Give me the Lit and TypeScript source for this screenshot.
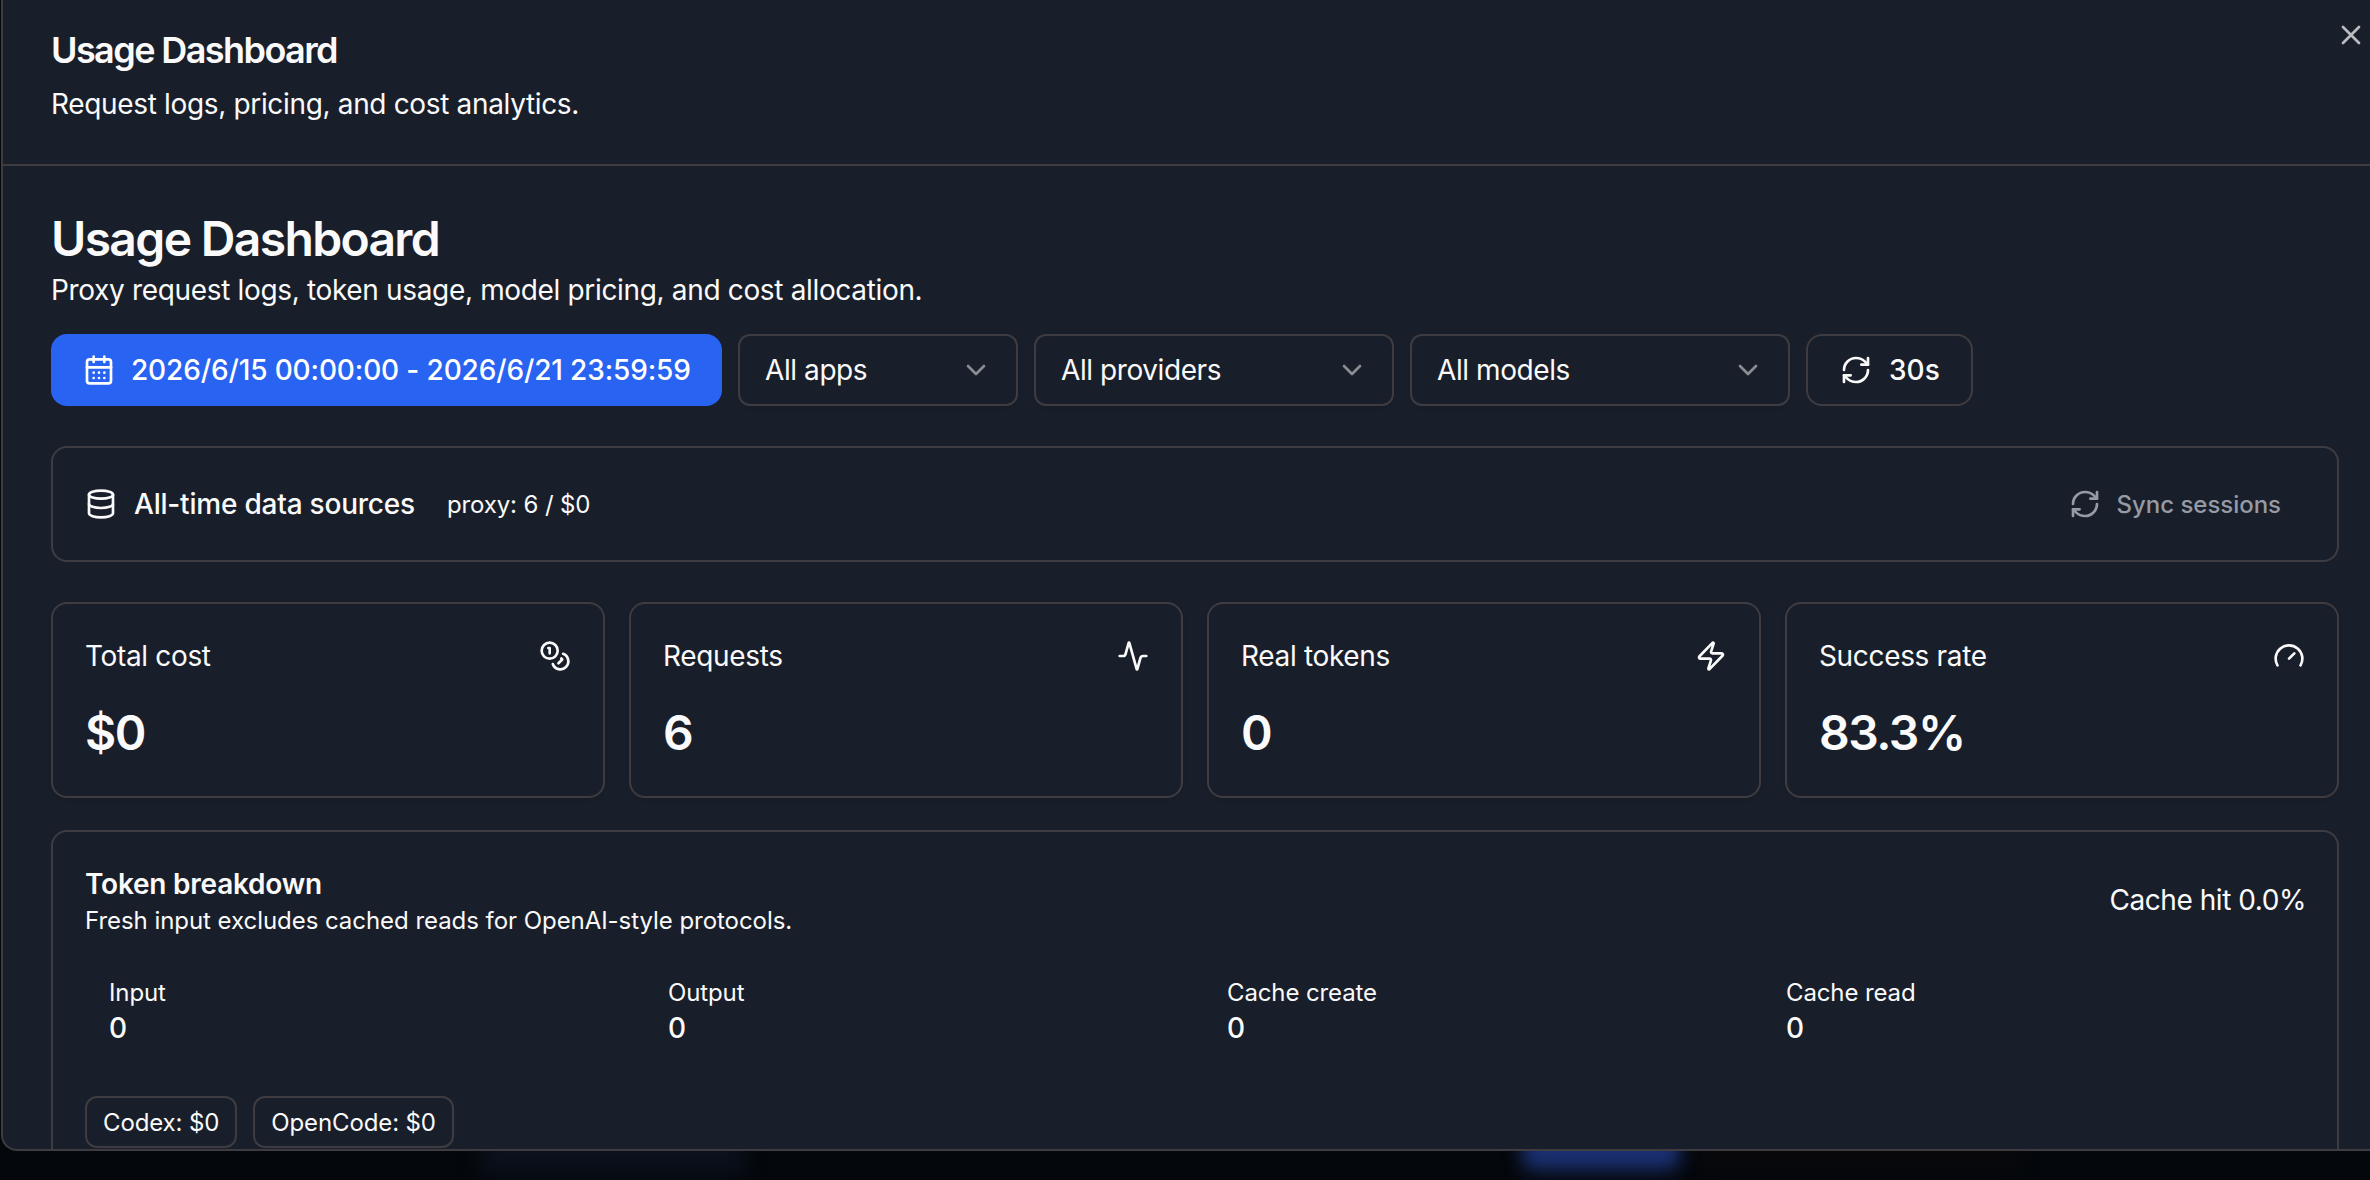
import { LitElement, html, css, svg } from "lit";
import { customElement, property } from "lit/decorators.js";

const ICONS: Record<string, unknown> = {
  calendar: svg`<path d="M8 2v4"/><path d="M16 2v4"/><rect width="18" height="18" x="3" y="4" rx="2"/><path d="M3 10h18"/><path d="M8 14h.01"/><path d="M12 14h.01"/><path d="M16 14h.01"/><path d="M8 18h.01"/><path d="M12 18h.01"/><path d="M16 18h.01"/>`,
  chevron: svg`<path d="m6 9 6 6 6-6"/>`,
  refresh: svg`<path d="M3 12a9 9 0 0 1 9-9 9.75 9.75 0 0 1 6.74 2.74L21 8"/><path d="M21 3v5h-5"/><path d="M21 12a9 9 0 0 1-9 9 9.75 9.75 0 0 1-6.74-2.74L3 16"/><path d="M8 16H3v5"/>`,
  database: svg`<ellipse cx="12" cy="5" rx="9" ry="3"/><path d="M3 5V19A9 3 0 0 0 21 19V5"/><path d="M3 12A9 3 0 0 0 21 12"/>`,
  coins: svg`<circle cx="8" cy="8" r="6"/><path d="M18.09 10.37A6 6 0 1 1 10.34 18"/><path d="M7 6h1v4"/><path d="m16.71 13.88.7.71-2.82 2.82"/>`,
  activity: svg`<path d="M22 12h-2.48a2 2 0 0 0-1.93 1.46l-2.35 8.36a.25.25 0 0 1-.48 0L9.24 2.18a.25.25 0 0 0-.48 0l-2.35 8.36A2 2 0 0 1 4.49 12H2"/>`,
  zap: svg`<path d="M4 14a1 1 0 0 1-.78-1.63l9.9-10.2a.5.5 0 0 1 .86.46l-1.92 6.02A1 1 0 0 0 13 10h7a1 1 0 0 1 .78 1.63l-9.9 10.2a.5.5 0 0 1-.86-.46l1.92-6.02A1 1 0 0 0 11 14z"/>`,
  gauge: svg`<path d="m12 14 4-4"/><path d="M3.34 19a10 10 0 1 1 17.32 0"/>`,
  close: svg`<path d="M18 6 6 18"/><path d="m6 6 12 12"/>`,
};

@customElement("ui-icon")
class UiIcon extends LitElement {
  @property() name = "";
  static styles = css`
    :host { display: block; width: 32px; height: 32px; flex: none; }
    .glyph { display: block; width: 100%; height: 100%; fill: none; stroke: currentColor; stroke-width: 2; stroke-linecap: round; stroke-linejoin: round; }
  `;
  render() {
    return html`<svg class="glyph" viewBox="0 0 24 24">${ICONS[this.name]}</svg>`;
  }
}

const SELECTS = [
  { label: "All apps", size: "apps" },
  { label: "All providers", size: "providers" },
  { label: "All models", size: "models" },
];
const STATS = [
  { label: "Total cost", value: "$0", icon: "coins" },
  { label: "Requests", value: "6", icon: "activity" },
  { label: "Real tokens", value: "0", icon: "zap" },
  { label: "Success rate", value: "83.3%", icon: "gauge" },
];
const TOKENS = [
  { label: "Input", value: "0" },
  { label: "Output", value: "0" },
  { label: "Cache create", value: "0" },
  { label: "Cache read", value: "0" },
];

@customElement("app-root")
class AppRoot extends LitElement {
  static styles = css`
    :host {
      display: block; position: relative; box-sizing: border-box; width: 100%; height: 1180px; overflow: hidden;
      padding-left: 1px; background: #04070b; color: #fafafa;
      font-family: Inter, "Liberation Sans", sans-serif; font-size: 28px; line-height: 40px; letter-spacing: -0.34px;
      --line: #3e3c40; --panel: #191f2a;
    }
    * { box-sizing: border-box; }
    h1, h2, h3, p { margin: 0; }
    .glow { position: absolute; filter: blur(9px); }
    .glow-primary { left: 1522px; top: 1120px; width: 158px; height: 50px; background: #1b3072; border-radius: 10px; }
    .glow-faint { left: 480px; top: 1130px; width: 265px; height: 44px; background: #0a101c; }
    .glow-grey { left: 1700px; top: 1130px; width: 320px; height: 36px; background: #09090c; }
    .dialog {
      position: relative; height: 1151px; background: var(--panel); overflow: hidden;
      border-left: 2px solid var(--line); border-bottom: 2px solid var(--line); border-bottom-left-radius: 16px;
    }
    .head { height: 166px; padding: 32px 48px 0; border-bottom: 2px solid var(--line); }
    .head-title { font-size: 36px; line-height: 36px; font-weight: 600; letter-spacing: -1.58px; margin-bottom: 16px; }
    .close { position: absolute; left: 2332px; top: 19px; color: #babcbf; }
    .body { padding: 40px 31px 0 48px; }
    .title { font-size: 48px; line-height: 65px; margin-bottom: -1px; font-weight: 600; letter-spacing: -1.66px; }
    .filters { display: flex; gap: 16px; margin: 24px 0 40px; }
    .btn { display: flex; align-items: center; gap: 16px; height: 72px; border-radius: 16px; font-weight: 500; white-space: nowrap; }
    .btn-date { width: 671px; padding: 0 32px; background: #2963f2; color: #fff; letter-spacing: -0.13px; }
    .btn-interval { width: 167px; padding: 0 32px; gap: 17px; border: 2px solid var(--line); letter-spacing: 0; }
    .select {
      display: flex; align-items: center; justify-content: space-between; height: 72px; padding: 0 24px 0 25px;
      border: 2px solid var(--line); border-radius: 12px; letter-spacing: -0.42px; box-shadow: 0 2px 4px rgba(0, 0, 0, 0.08);
    }
    .apps { width: 280px; }
    .providers { width: 360px; }
    .models { width: 380px; }
    .chevron { color: #898c91; }
    .card { border: 2px solid var(--line); border-radius: 16px; }
    .sources { display: flex; align-items: center; height: 116px; padding: 0 32px; margin-bottom: 40px; }
    .sources-name { margin: 0 32px 0 17px; font-weight: 500; letter-spacing: -0.21px; }
    .small { font-size: 24px; line-height: 33px; letter-spacing: -0.12px; }
    .inline { padding-top: 1px; }
    .sync { display: flex; align-items: center; gap: 16px; margin-left: auto; padding-right: 24px; color: #959aa5; font-weight: 500; letter-spacing: -0.03px; }
    .stats { display: grid; grid-template-columns: repeat(4, 1fr); gap: 24px; margin-bottom: 32px; }
    .stat { height: 196px; padding: 32px; box-shadow: 0 2px 4px rgba(0, 0, 0, 0.08); }
    .stat-top { display: flex; align-items: center; justify-content: space-between; margin-bottom: 24px; }
    .stat-value { font-size: 48px; line-height: 65px; font-weight: 600; letter-spacing: -1.5px; }
    .breakdown { height: 400px; padding: 32px; }
    .breakdown-top { display: flex; align-items: center; justify-content: space-between; height: 72px; margin-bottom: 24px; }
    .breakdown-title { font-size: 28px; line-height: 40px; font-weight: 600; letter-spacing: -0.23px; }
    .note { margin-bottom: -1px; letter-spacing: -0.05px; }
    .hit { margin-right: -1px; letter-spacing: -0.45px; }
    .tokens { display: grid; grid-template-columns: repeat(4, 1fr); gap: 16px; margin-bottom: 32px; }
    .token { padding: 16px 24px; }
    .token-label { margin-bottom: -1px; }
    .token-value { font-weight: 500; }
    .chips { display: flex; gap: 16px; }
    .chip { display: flex; align-items: center; height: 52px; padding: 1px 16px 0; border: 2px solid var(--line); border-radius: 12px; white-space: nowrap; }
  `;

  render() {
    return html`
      <div class="glow glow-faint"></div>
      <div class="glow glow-grey"></div>
      <div class="glow glow-primary"></div>
      <section class="dialog">
        <header class="head">
          <h1 class="head-title">Usage Dashboard</h1>
          <p>Request logs, pricing, and cost analytics.</p>
          <ui-icon class="close" name="close"></ui-icon>
        </header>
        <main class="body">
          <h2 class="title">Usage Dashboard</h2>
          <p>Proxy request logs, token usage, model pricing, and cost allocation.</p>
          <div class="filters">
            <div class="btn btn-date"><ui-icon name="calendar"></ui-icon><span>2026/6/15 00:00:00 - 2026/6/21 23:59:59</span></div>
            ${SELECTS.map((s) => html`<div class="select ${s.size}"><span>${s.label}</span><ui-icon class="chevron" name="chevron"></ui-icon></div>`)}
            <div class="btn btn-interval"><ui-icon name="refresh"></ui-icon><span>30s</span></div>
          </div>
          <div class="card sources">
            <ui-icon name="database"></ui-icon>
            <span class="sources-name">All-time data sources</span>
            <span class="small inline">proxy: 6 / $0</span>
            <div class="small sync"><ui-icon name="refresh"></ui-icon><span class="inline">Sync sessions</span></div>
          </div>
          <div class="stats">
            ${STATS.map((s) => html`<div class="card stat">
              <div class="stat-top"><span>${s.label}</span><ui-icon name=${s.icon}></ui-icon></div>
              <div class="stat-value">${s.value}</div>
            </div>`)}
          </div>
          <div class="card breakdown">
            <div class="breakdown-top">
              <div>
                <h3 class="breakdown-title">Token breakdown</h3>
                <p class="small note">Fresh input excludes cached reads for OpenAI-style protocols.</p>
              </div>
              <span class="hit">Cache hit 0.0%</span>
            </div>
            <div class="tokens">
              ${TOKENS.map((t) => html`<div class="token"><div class="small token-label">${t.label}</div><div class="token-value">${t.value}</div></div>`)}
            </div>
            <div class="chips">
              <span class="chip small">Codex: $0</span>
              <span class="chip small">OpenCode: $0</span>
            </div>
          </div>
        </main>
      </section>
    `;
  }
}
